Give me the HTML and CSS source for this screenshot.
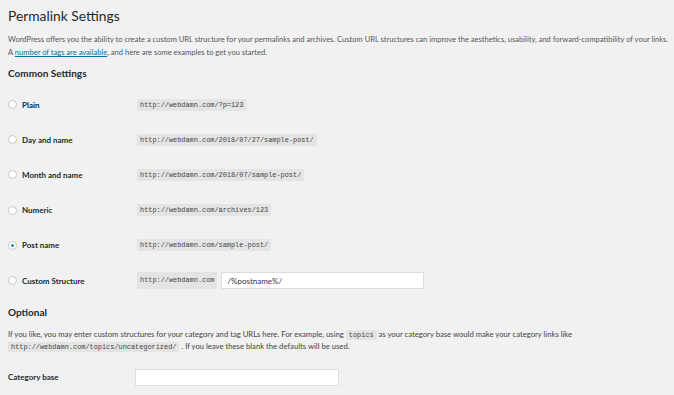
FILE: index.html
```html
<!DOCTYPE html>
<html lang="en">
<head>
  <meta charset="UTF-8">
  <title>Permalink Settings</title>
  <link rel="stylesheet" href="styles.css">
</head>
<body>
  <div class="wrap">
    <h1>Permalink Settings</h1>
    <p class="intro">WordPress offers you the ability to create a custom URL structure for your permalinks and archives. Custom URL structures can improve the aesthetics, usability, and forward-compatibility of your links.<br>A <a href="#">number of tags are available</a>, and here are some examples to get you started.</p>

    <h2>Common Settings</h2>
    <div class="form-table">
      <div class="row">
        <label class="opt"><span class="radio"></span>Plain</label>
        <code>http://webdamn.com/?p=123</code>
      </div>
      <div class="row">
        <label class="opt"><span class="radio"></span>Day and name</label>
        <code>http://webdamn.com/2018/07/27/sample-post/</code>
      </div>
      <div class="row">
        <label class="opt"><span class="radio"></span>Month and name</label>
        <code>http://webdamn.com/2018/07/sample-post/</code>
      </div>
      <div class="row">
        <label class="opt"><span class="radio"></span>Numeric</label>
        <code>http://webdamn.com/archives/123</code>
      </div>
      <div class="row">
        <label class="opt"><span class="radio checked"></span>Post name</label>
        <code>http://webdamn.com/sample-post/</code>
      </div>
      <div class="row">
        <label class="opt"><span class="radio"></span>Custom Structure</label>
        <div class="custom">
          <code class="tall">http://webdamn.com</code>
          <input type="text" class="structure" value="/%postname%/">
        </div>
      </div>
    </div>

    <h2 class="optional">Optional</h2>
    <p class="note">If you like, you may enter custom structures for your category and tag URLs here. For example, using <code>topics</code> as your category base would make your category links like<br><code>http://webdamn.com/topics/uncategorized/</code> . If you leave these blank the defaults will be used.</p>

    <div class="row base">
      <label class="opt">Category base</label>
      <input type="text" class="base-input">
    </div>
  </div>
</body>
</html>
```

FILE: styles.css
```css
body { margin: 0; background: #f1f1f1; color: #444; font-family: Lato, sans-serif; font-size: 8px; overflow: hidden; }
.wrap { padding: 6px 0 0 8px; white-space: nowrap; }
h1 { margin: 0; font-size: 13.8px; font-weight: 400; color: #23282d; line-height: 20px; }
.intro { margin: 7px 0 0; font-size: 7.55px; line-height: 13px; color: #555; }
.intro a { color: #0073aa; }
h2 { margin: 7px 0 0; font-size: 10px; font-weight: 700; color: #23282d; line-height: 14px; }
.form-table { margin-top: 7px; }
.row { display: flex; align-items: center; height: 35.2px; }
.opt { display: flex; align-items: center; width: 129px; font-weight: 700; color: #23282d; font-size: 8px; }
.radio { width: 9px; height: 9px; border: 1px solid #c3c6c9; border-radius: 50%; background: #fff; margin: 0 5px 0 0; box-sizing: border-box; display: inline-flex; align-items: center; justify-content: center; }
.radio.checked::after { content: ""; width: 3px; height: 3px; border-radius: 50%; background: #1e8cbe; }
code { font-family: "Liberation Mono", monospace; font-size: 6.9px; background: #e4e4e4; color: #444; padding: 2px 3px; line-height: 8px; }
.custom { display: flex; align-items: center; gap: 4px; }
code.tall { line-height: 13px; }
input { font-family: Lato, sans-serif; font-size: 8px; border: 1px solid #ddd; background: #fff; height: 17px; box-sizing: border-box; padding: 0 5px; color: #32373c; }
.structure { width: 203px; }
.optional { margin-top: 7px; }
.note { margin: 9px 0 0; font-size: 7.7px; line-height: 12px; }
.note code { padding: 1px 3px; }
.base { margin-top: 16px; height: 18px; }
.base-input { width: 204px; margin-left: -2px; }
```
